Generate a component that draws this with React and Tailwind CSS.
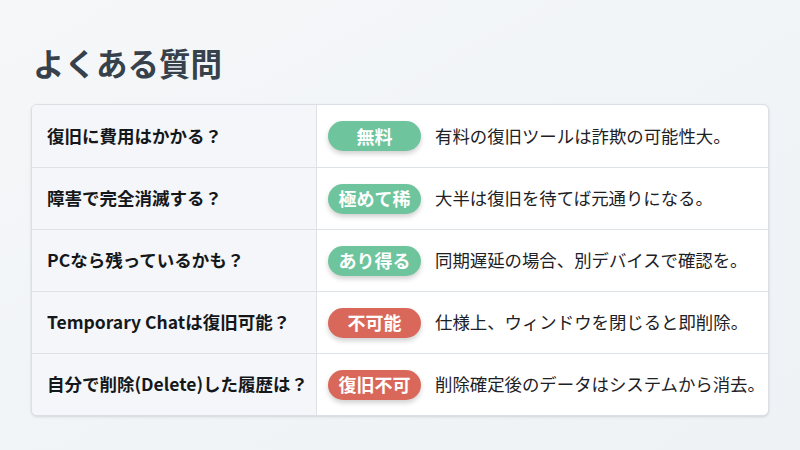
import React from 'react';

const rows = [
  { q: '復旧に費用はかかる？', badge: '無料', tone: 'green', a: '有料の復旧ツールは詐欺の可能性大。' },
  { q: '障害で完全消滅する？', badge: '極めて稀', tone: 'green', a: '大半は復旧を待てば元通りになる。' },
  { q: 'PCなら残っているかも？', badge: 'あり得る', tone: 'green', a: '同期遅延の場合、別デバイスで確認を。' },
  { q: 'Temporary Chatは復旧可能？', badge: '不可能', tone: 'red', a: '仕様上、ウィンドウを閉じると即削除。' },
  { q: '自分で削除(Delete)した履歴は？', badge: '復旧不可', tone: 'red', a: '削除確定後のデータはシステムから消去。' },
];

const font = { fontFamily: '"Noto Sans CJK JP", "Noto Sans", sans-serif' };

const App = () => {
  return (
    <div className="w-[800px] h-[450px] bg-gradient-to-br from-[#f5f7f9] to-[#eef2f5] px-[31px] overflow-hidden" style={font}>
      <h1 className="pt-[42px] pl-[2px] text-[31.5px] leading-[40px] font-bold text-[#37414b]">よくある質問</h1>
      <div className="mt-[22px] bg-white border border-[#d9dfe5] rounded-md overflow-hidden shadow-sm">
        {rows.map((r, i) => (
          <div key={i} className={`flex h-[62px] ${i > 0 ? 'border-t border-[#dde2e7]' : ''}`}>
            <div className="w-[285px] shrink-0 bg-[#f4f6f9] border-r border-[#dde2e7] flex items-center pl-[15px] text-[17.5px] font-bold text-[#15181b]">
              {r.q}
            </div>
            <div className="flex items-center pl-[11px] gap-[14px]">
              <span className={`w-[93px] h-[30px] rounded-full flex items-center justify-center text-[18px] font-bold text-white shadow-[0_3px_5px_rgba(0,0,0,0.18)] ${r.tone === 'green' ? 'bg-[#6dc49d]' : 'bg-[#d9685b]'}`}>
                {r.badge}
              </span>
              <span className="text-[17.4px] text-[#1d2125]">{r.a}</span>
            </div>
          </div>
        ))}
      </div>
    </div>
  );
};

export default App;
